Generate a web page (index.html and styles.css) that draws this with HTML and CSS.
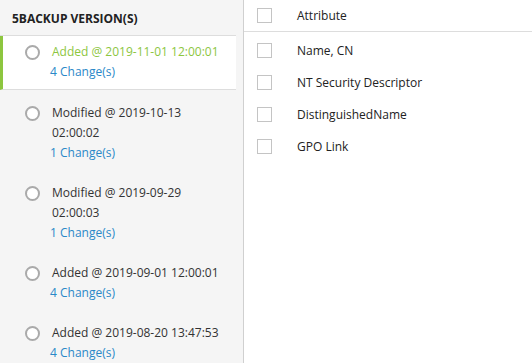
FILE: index.html
```html
<!DOCTYPE html>
<html>
<head>
<meta charset="utf-8">
<link rel="stylesheet" href="styles.css">
</head>
<body>
<div class="app">
  <aside class="versions">
    <div class="versions-title">5BACKUP VERSION(S)</div>
    <ul class="version-list">
      <li class="version selected">
        <span class="radio"></span>
        <div class="version-text">
          <div class="version-label">Added @ 2019-11-01 12:00:01</div>
          <a class="changes">4 Change(s)</a>
        </div>
      </li>
      <li class="version">
        <span class="radio"></span>
        <div class="version-text">
          <div class="version-label">Modified @ 2019-10-13<br>02:00:02</div>
          <a class="changes">1 Change(s)</a>
        </div>
      </li>
      <li class="version">
        <span class="radio"></span>
        <div class="version-text">
          <div class="version-label">Modified @ 2019-09-29<br>02:00:03</div>
          <a class="changes">1 Change(s)</a>
        </div>
      </li>
      <li class="version">
        <span class="radio"></span>
        <div class="version-text">
          <div class="version-label">Added @ 2019-09-01 12:00:01</div>
          <a class="changes">4 Change(s)</a>
        </div>
      </li>
      <li class="version">
        <span class="radio"></span>
        <div class="version-text">
          <div class="version-label">Added @ 2019-08-20 13:47:53</div>
          <a class="changes">4 Change(s)</a>
        </div>
      </li>
    </ul>
  </aside>
  <main class="attributes">
    <div class="attr-row attr-head">
      <span class="checkbox"></span>
      <span class="attr-name">Attribute</span>
    </div>
    <div class="attr-body">
      <div class="attr-row"><span class="checkbox"></span><span class="attr-name">Name, CN</span></div>
      <div class="attr-row"><span class="checkbox"></span><span class="attr-name">NT Security Descriptor</span></div>
      <div class="attr-row"><span class="checkbox"></span><span class="attr-name">DistinguishedName</span></div>
      <div class="attr-row"><span class="checkbox"></span><span class="attr-name">GPO Link</span></div>
    </div>
  </main>
</div>
</body>
</html>
```
FILE: styles.css
```css
* { box-sizing: border-box; }
html, body { margin: 0; padding: 0; }
body {
  font-family: "Open Sans", "Liberation Sans", sans-serif;
  font-size: 12px;
  color: #333;
  background: #fff;
}
.app {
  display: flex;
  height: 363px;
  overflow: hidden;
}
.versions {
  width: 244px;
  flex: none;
  background: #f5f5f5;
  border-right: 1px solid #d0d0d0;
}
.versions-title {
  height: 36px;
  padding: 10px 0 0 12px;
  font-weight: 700;
  font-size: 12px;
  color: #222;
  border-bottom: 1px solid #ddd;
  margin-right: 7px;
}
.version-list {
  list-style: none;
  margin: 0;
  padding: 0;
  margin-right: 7px;
}
.version {
  display: flex;
  align-items: flex-start;
  padding: 6px 0 7px 25px;
  margin-bottom: 7px;
  line-height: 20px;
}
.version.selected {
  background: #fff;
  border-left: 3px solid #8dc63f;
  border-bottom: 1px solid #ddd;
  padding-left: 22px;
  margin-bottom: 7px;
}
.radio {
  flex: none;
  width: 15px;
  height: 15px;
  border: 2px solid #aaa;
  border-radius: 50%;
  margin-top: 3px;
  background: #fff;
}
.version-text {
  margin-left: 12px;
}
.version-label {
  color: #333;
}
.version.selected .version-label {
  color: #8dc63f;
}
.changes {
  display: block;
  color: #2a88c8;
  margin-left: -2px;
}
.attributes {
  flex: 1;
}
.attr-row {
  display: flex;
  align-items: center;
  height: 32px;
  padding-left: 13px;
}
.attr-head {
  height: 32px;
  border-bottom: 1px solid #ddd;
}
.attr-body {
  padding-top: 2px;
}
.checkbox {
  flex: none;
  width: 15px;
  height: 15px;
  border: 1px solid #c4c4c4;
  background: #fff;
}
.attr-name {
  margin-left: 25px;
  color: #222;
}
```
